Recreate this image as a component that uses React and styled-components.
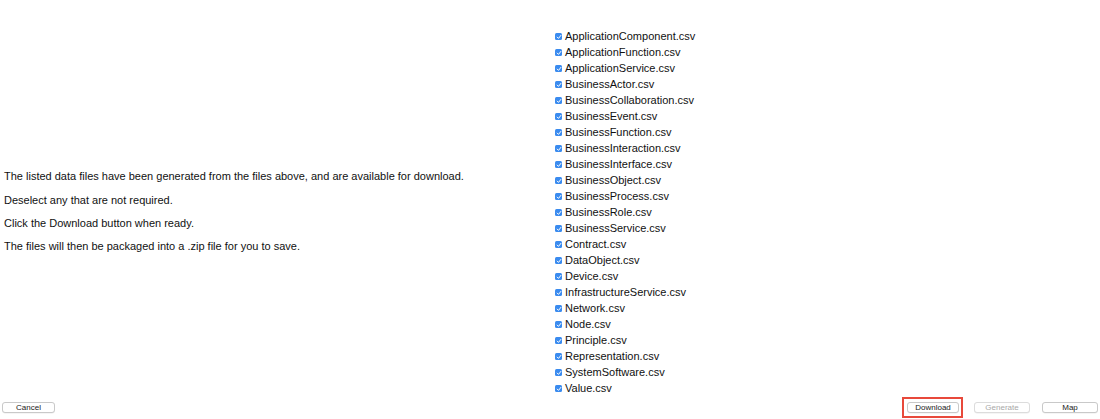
import React, { useState } from "react";
import styled, { createGlobalStyle } from "styled-components";

const GlobalStyle = createGlobalStyle`
  body {
    margin: 0;
    background: #fff;
    font-family: "Liberation Sans", Arial, sans-serif;
    color: #111;
  }
`;

const Page = styled.div`
  height: 419px;
  display: flex;
  flex-direction: column;
`;

const Content = styled.div`
  display: grid;
  grid-template-columns: 555px 1fr;
  align-items: center;
  padding-top: 28px;
`;

const Intro = styled.div`
  padding-left: 4px;
`;

const Para = styled.p`
  margin: 0 0 10px;
  font-size: 11px;
  line-height: 13.33px;

  &:last-child {
    margin-bottom: 0;
  }
`;

const FileList = styled.ul`
  list-style: none;
  margin: 0;
  padding: 0;
`;

const FileRow = styled.li`
  display: flex;
  align-items: center;
  gap: 3px;
  height: 16px;
  font-size: 11px;
  line-height: 16px;
  cursor: pointer;
`;

const Box = styled.span`
  width: 7px;
  height: 7px;
  border-radius: 1.5px;
  background: ${(p) => (p.$checked ? "#3a8bef" : "#fff")};
  border: ${(p) => (p.$checked ? "none" : "1px solid #aaa")};
  box-sizing: border-box;
  display: flex;
  align-items: center;
  justify-content: center;
  margin-top: 1px;
`;

const Footer = styled.div`
  height: 23px;
  display: flex;
  align-items: center;
  justify-content: space-between;
  padding: 0 2px;
`;

const ButtonGroup = styled.div`
  display: flex;
  align-items: center;
  gap: 11px;
`;

const Button = styled.button`
  width: ${(p) => p.$width || 54}px;
  height: 11px;
  margin-left: ${(p) => p.$push || 0}px;
  padding: 0;
  box-sizing: border-box;
  border: 1px solid #c9c9c9;
  border-radius: 3px;
  background: #fff;
  box-shadow: 0 0.5px 0.5px rgba(0, 0, 0, 0.08);
  font-family: "Liberation Sans", Arial, sans-serif;
  font-size: 8px;
  line-height: 9px;
  color: ${(p) => (p.disabled ? "#a8a8a8" : "#222")};
  border-color: ${(p) => (p.disabled ? "#dcdcdc" : "#c9c9c9")};
`;

const Highlight = styled.span`
  display: flex;
  padding: 3px 2px 3px 3px;
  border: 2px solid #e8493b;
`;

const files = [
  "ApplicationComponent.csv",
  "ApplicationFunction.csv",
  "ApplicationService.csv",
  "BusinessActor.csv",
  "BusinessCollaboration.csv",
  "BusinessEvent.csv",
  "BusinessFunction.csv",
  "BusinessInteraction.csv",
  "BusinessInterface.csv",
  "BusinessObject.csv",
  "BusinessProcess.csv",
  "BusinessRole.csv",
  "BusinessService.csv",
  "Contract.csv",
  "DataObject.csv",
  "Device.csv",
  "InfrastructureService.csv",
  "Network.csv",
  "Node.csv",
  "Principle.csv",
  "Representation.csv",
  "SystemSoftware.csv",
  "Value.csv",
];

const Check = ({ checked }) => (
  <Box $checked={checked}>
    {checked && (
      <svg width="6" height="6" viewBox="0 0 6 6">
        <path d="M1.2 3.1 L2.5 4.4 L4.9 1.4" fill="none" stroke="#fff" strokeWidth="1" strokeLinecap="round" strokeLinejoin="round" />
      </svg>
    )}
  </Box>
);

export default function App() {
  const [selected, setSelected] = useState(() => new Set(files));

  const toggle = (name) => {
    setSelected((prev) => {
      const next = new Set(prev);
      if (next.has(name)) next.delete(name);
      else next.add(name);
      return next;
    });
  };

  return (
    <>
      <GlobalStyle />
      <Page>
        <Content>
          <Intro>
            <Para>The listed data files have been generated from the files above, and are available for download.</Para>
            <Para>Deselect any that are not required.</Para>
            <Para>Click the Download button when ready.</Para>
            <Para>The files will then be packaged into a .zip file for you to save.</Para>
          </Intro>
          <FileList>
            {files.map((f) => (
              <FileRow key={f} onClick={() => toggle(f)}>
                <Check checked={selected.has(f)} />
                {f}
              </FileRow>
            ))}
          </FileList>
        </Content>
        <Footer>
          <Button $width={53}>Cancel</Button>
          <ButtonGroup>
            <Highlight>
              <Button $width={52}>Download</Button>
            </Highlight>
            <Button $width={56} disabled>Generate</Button>
            <Button $width={56} $push={1}>Map</Button>
          </ButtonGroup>
        </Footer>
      </Page>
    </>
  );
}
